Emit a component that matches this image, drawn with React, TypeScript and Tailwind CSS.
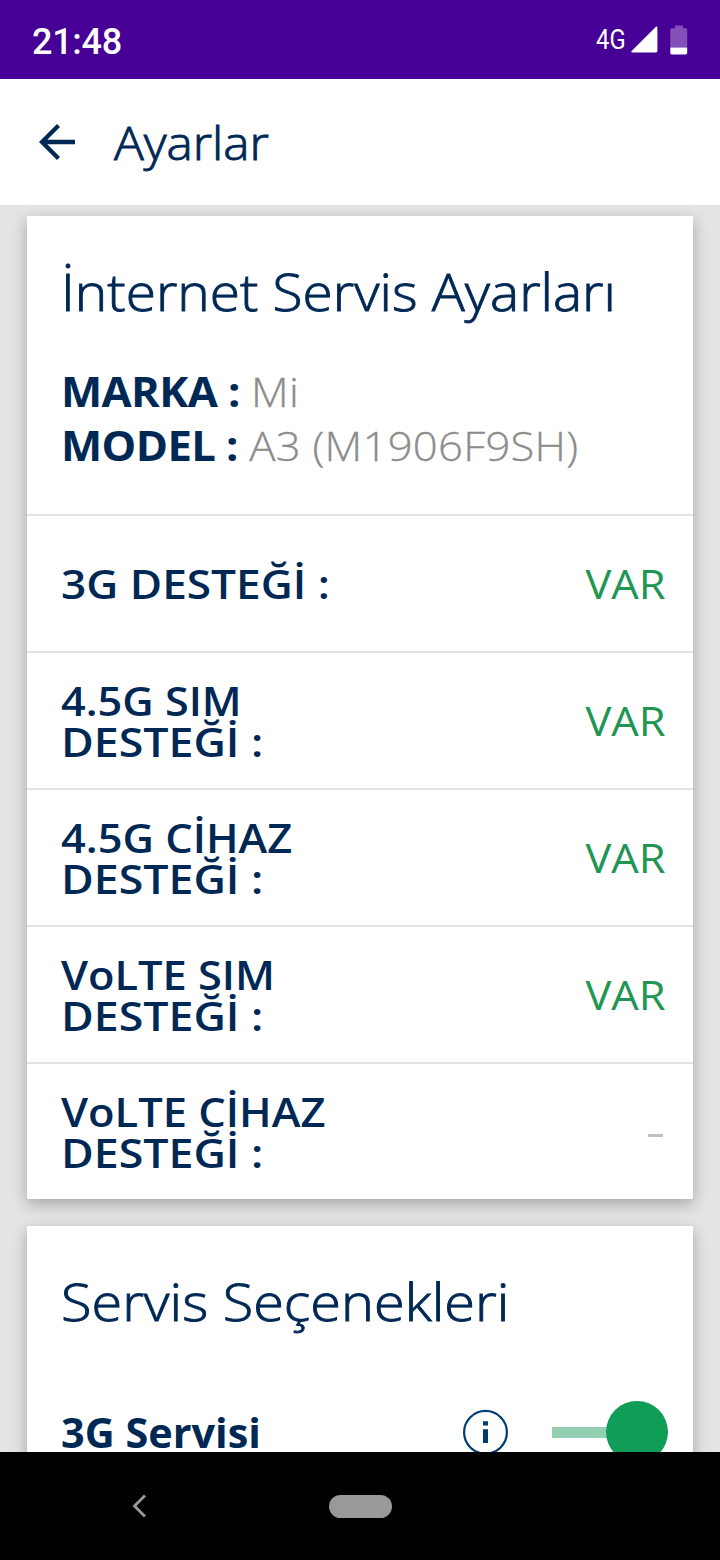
import type { ReactNode } from "react";
import clsx from "clsx";

const supports = [
  { lines: ["3G DESTEĞİ :"], value: "VAR", scale: ["scale-x-[1.104]"] },
  {
    lines: ["4.5G SIM", "DESTEĞİ :"],
    value: "VAR",
    scale: ["scale-x-[1.081]", "scale-x-[1.117]"],
  },
  {
    lines: ["4.5G CİHAZ", "DESTEĞİ :"],
    value: "VAR",
    scale: ["scale-x-[1.084]", "scale-x-[1.117]"],
  },
  {
    lines: ["VoLTE SIM", "DESTEĞİ :"],
    value: "VAR",
    scale: ["scale-x-[1.084]", "scale-x-[1.117]"],
  },
  {
    lines: ["VoLTE CİHAZ", "DESTEĞİ :"],
    value: null,
    scale: ["scale-x-[1.086]", "scale-x-[1.117]"],
  },
];

function StatusBar() {
  return (
    <div className="h-[79px] shrink-0 bg-[#460096] text-white flex items-center justify-between px-8 font-['Roboto',sans-serif]">
      <span className="text-[36px] leading-none font-medium tracking-[-0.3px] mt-[5px]">
        21:48
      </span>
      <div className="flex items-center">
        <span className="text-[28px] leading-none w-[30px] mr-[5px]">
          <span className="inline-block origin-left scale-x-[0.85]">4G</span>
        </span>
        <svg width="27" height="27" viewBox="0 0 27 27" className="mr-3">
          <path
            d="M1.2 26.5H25a1.4 1.4 0 0 0 1.4-1.4V1.5c0-1-1-1.3-1.7-.6L.6 25c-.6.6-.4 1.5.6 1.5Z"
            fill="white"
          />
        </svg>
        <svg width="18" height="30" viewBox="0 0 18 30">
          <path
            d="M5 0.5h8v2.8h2.8A1.4 1.4 0 0 1 17.2 4.7V22.5H.3V4.7A1.4 1.4 0 0 1 1.7 3.3H5Z"
            fill="#8250b7"
          />
          <path d="M.3 22.5h16.9v5.5a1.4 1.4 0 0 1-1.4 1.4H1.7A1.4 1.4 0 0 1 .3 28Z" fill="white" />
        </svg>
      </div>
    </div>
  );
}

function Header() {
  return (
    <header className="h-[126px] shrink-0 bg-white flex items-center pl-[39px]">
      <svg width="37" height="38" viewBox="0 0 37 38" fill="none" className="mr-[38px]">
        <path d="M36 19H3M19.5 2.5L3 19l16.5 16.5" stroke="#002855" strokeWidth="4.3" />
      </svg>
      <h1 className="text-[46px] leading-none font-light [-webkit-text-stroke:0.9px_#002855] origin-left scale-x-[1.078] mb-px">
        Ayarlar
      </h1>
    </header>
  );
}

function Card({ title, children }: { title: ReactNode; children: ReactNode }) {
  return (
    <section className="shrink-0 bg-white shadow-[0_5px_14px_rgba(0,0,0,0.28)]">
      <h2 className="pt-[47px] pb-px pl-[34px] text-[51px] leading-[56px] font-light [-webkit-text-stroke:0.9px_#002855] whitespace-nowrap">
        {title}
      </h2>
      {children}
    </section>
  );
}

function SupportRow({ lines, value, scale }: (typeof supports)[number]) {
  return (
    <div className="h-[137px] border-t-2 border-[#e3e3e3] flex items-center justify-between pl-[34px] pr-[27px]">
      <div className="text-[40px] leading-[41px] font-semibold whitespace-nowrap">
        {lines.map((line, i) => (
          <div key={line} className={clsx("origin-left", scale[i])}>
            {line}
          </div>
        ))}
      </div>
      {value ? (
        <span className="text-[41px] leading-none text-[#219653] origin-right scale-x-[1.06] mb-px">
          {value}
        </span>
      ) : (
        <span className="w-[15px] h-[3px] mr-[3px] mt-[7px] bg-[#c0c0c0]" />
      )}
    </div>
  );
}

function InfoIcon() {
  return (
    <svg width="46" height="46" viewBox="0 0 46 46">
      <circle cx="22.5" cy="23.3" r="21.4" fill="none" stroke="#003c71" strokeWidth="2.2" />
      <path d="M20 12.2h5v4.4h-5ZM20 20.3h5V34h-5Z" fill="#003c71" />
    </svg>
  );
}

function Toggle() {
  return (
    <div className="w-[116px] h-[62px] flex items-center">
      <div className="w-[55px] h-[11px] bg-[#95cfb3]" />
      <div className="w-[62px] h-[62px] rounded-full -ml-px bg-[#0f9d58]" />
    </div>
  );
}

function DeviceLine({ label, value }: { label: string; value: string }) {
  return (
    <div className="text-[41px] leading-[54px] whitespace-nowrap origin-left scale-x-[1.064]">
      <b className="font-bold tracking-[-0.55px]">{label}</b>{" "}
      <span className="font-light tracking-[0.25px] text-[#8c8c8c] [-webkit-text-stroke:0.3px_#8c8c8c]">
        {value}
      </span>
    </div>
  );
}

function NavBar() {
  return (
    <nav className="h-[108px] shrink-0 bg-black flex items-center pl-[132px]">
      <svg width="15" height="24" viewBox="0 0 15 24" fill="none" className="mr-[182px]">
        <path d="M13 1.5L2.5 12L13 22.5" stroke="#999999" strokeWidth="2.8" />
      </svg>
      <div className="w-[63px] h-[23px] rounded-full bg-[#999999]" />
    </nav>
  );
}

export default function App() {
  return (
    <div className="w-[720px] h-[1560px] overflow-hidden flex flex-col bg-[#e4e4e4] text-[#002855] font-['Open_Sans','Noto_Sans',sans-serif]">
      <StatusBar />
      <Header />
      <main className="flex-1 min-h-0 overflow-hidden flex flex-col gap-[27px] pt-[11px] px-[27px]">
        <Card
          title={
            <span className="inline-block origin-left scale-x-[1.078]">
              İnternet Servis Ayarları
            </span>
          }
        >
          <div className="h-[194px] pt-[44px] pl-[34px]">
            <DeviceLine label="MARKA :" value="Mi" />
            <DeviceLine label="MODEL :" value="A3 (M1906F9SH)" />
          </div>
          {supports.map((row) => (
            <SupportRow key={row.lines.join(" ")} {...row} />
          ))}
        </Card>
        <Card
          title={
            <span className="inline-block origin-left scale-x-[1.095]">Servis Seçenekleri</span>
          }
        >
          <div className="h-[140px] mt-8 flex items-center pl-[34px] pr-[25px]">
            <span className="flex-1 text-[41px] leading-none font-bold">
              <span className="inline-block origin-left scale-x-[1.01]">3G Servisi</span>
            </span>
            <InfoIcon />
            <div className="w-[43px]" />
            <Toggle />
          </div>
        </Card>
      </main>
      <NavBar />
    </div>
  );
}
